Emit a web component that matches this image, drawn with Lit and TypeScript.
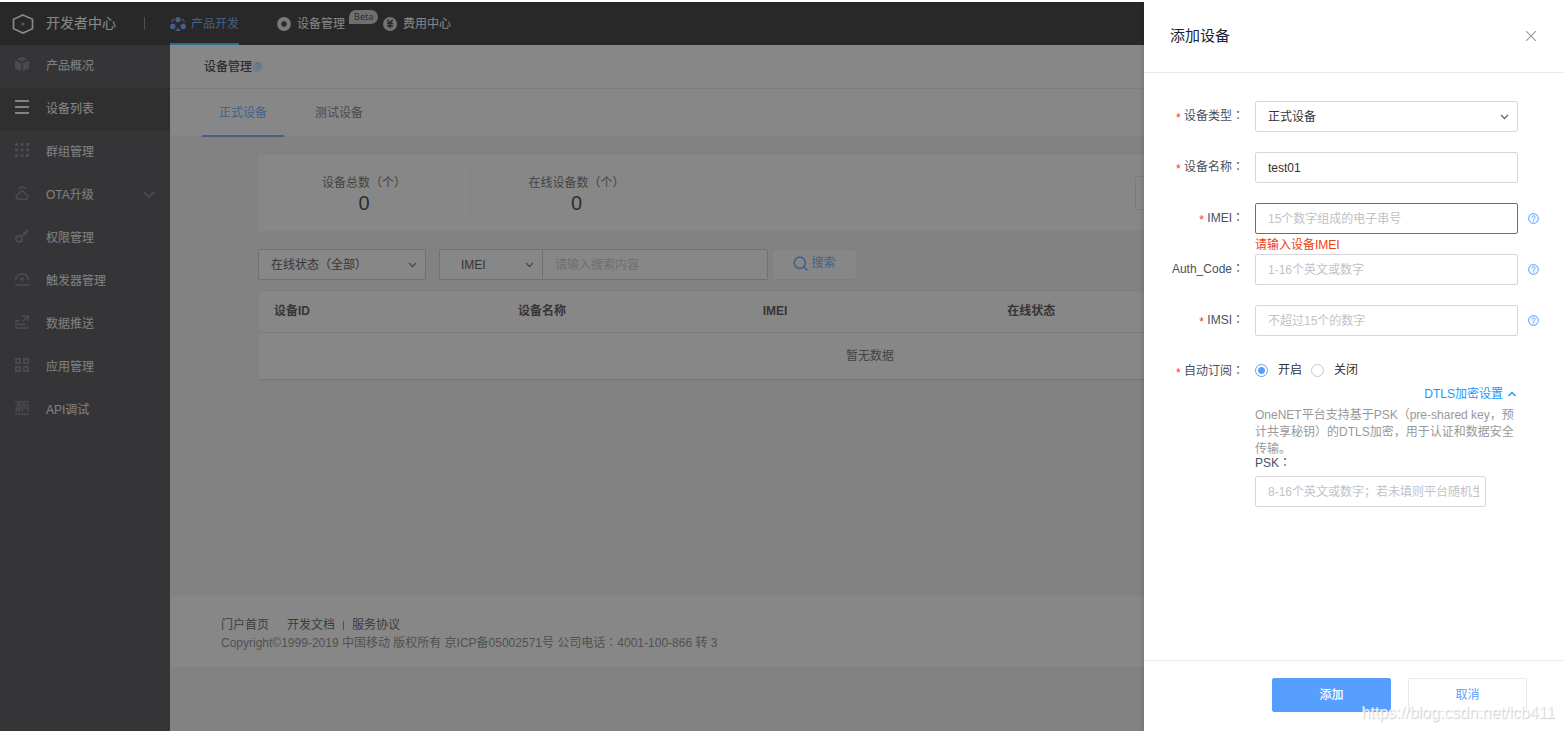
import { LitElement, html, css, svg, nothing } from "lit";
import { customElement, state } from "lit/decorators.js";
import { classMap } from "lit/directives/class-map.js";

const base = css`
  :host {
    display: block;
    box-sizing: border-box;
    font: 12px/18px "Liberation Sans", "Noto Sans CJK SC", sans-serif;
    text-spacing-trim: space-all;
  }
  *, *::before, *::after { box-sizing: border-box; }
  a { color: inherit; text-decoration: none; }
  button, input, select { font: inherit; margin: 0; }
  button { cursor: pointer; }
  svg { display: block; flex: none; }
  .mid { font-family: "Liberation Sans", "Noto Sans CJK TC", sans-serif; }
  .field {
    height: 31px;
    width: 100%;
    padding: 0 12px;
    border: 1px solid #d7d7db;
    border-radius: 2px;
    background: #fff;
    color: #333;
    outline: none;
    appearance: none;
  }
  .field::placeholder { color: #bfc2c9; opacity: 1; }
  .select { position: relative; }
  .select svg { position: absolute; right: 9px; top: 12px; pointer-events: none; }
`;

const chevron = html`<svg width="9" height="8" viewBox="0 0 9 8" fill="none" stroke="#666" stroke-width="1.3" aria-hidden="true"><path d="M1 2l3.5 3.5L8 2"/></svg>`;

const glyph = (body: unknown) =>
  html`<svg width="14" height="14" viewBox="0 0 14 14" aria-hidden="true">${body}</svg>`;

const glyphs: Record<string, unknown> = {
  box: svg`<path fill="currentColor" d="M7 0l5.6 2L7 4.4 1.4 2zM0 3.6l6.2 2.5V14L0 11.6zM14 3.6L7.8 6.1V14l6.2-2.4z"/>`,
  list: svg`<path fill="currentColor" d="M0 0h14v2H0zM0 6h14v2H0zM0 12h14v2H0z"/>`,
  dots: svg`<path fill="currentColor" d="M0 0h3v3H0zM5.5 0h3v3h-3zM11 0h3v3h-3zM0 5.5h3v3H0zM5.5 5.5h3v3h-3zM11 5.5h3v3h-3zM0 11h3v3H0zM5.5 11h3v3h-3zM11 11h3v3h-3z"/>`,
  ota: svg`<path fill="none" stroke="currentColor" stroke-width="1.6" d="M3.3 13.2a2.500 2.500 0 0 1-.6-4.800Q4.500 7.800 4.800 6.200a2.800 2.800 0 0 1 4.400 0Q9.500 7.800 11.300 8.400a2.500 2.500 0 0 1-.6 4.800zM3.300 2.800q3.700-3.600 7.400 0"/>`,
  key: svg`<g fill="none" stroke="currentColor" stroke-width="1.8"><circle cx="4" cy="10" r="3"/><path d="M6 7.800L13.300.8M8.500 3l2.800 2.800M11 1.500l1.800 1.800"/></g>`,
  trigger: svg`<path fill="none" stroke="currentColor" stroke-width="1.7" d="M.8 8A6.200 6.200 0 0 1 13.200 8M0 13h14"/><circle cx="7" cy="7" r="2" fill="currentColor"/>`,
  push: svg`<path fill="none" stroke="currentColor" stroke-width="1.7" d="M0 5.800h4M0 9.400h10M0 13h14M7 1h6v5M12.800 1.200L7.500 6.500"/>`,
  apps: svg`<path fill="none" stroke="currentColor" stroke-width="1.8" d="M.9.9h4.200v4.200H.9zM8.900.9h4.200v4.200H8.900zM.9 8.900h4.200v4.200H.9zM8.900 8.900h4.200v4.200H8.900z"/>`,
  api: svg`<path fill="none" stroke="currentColor" stroke-width="1.4" d="M0 .7h14M0 13.300h14M1 11L3 3h1.700v8M1.600 8.500h3M7.300 11V3.200h2.900v3.900H7.300M13 3v8"/>`,
};

const mark = (text: string) => html`<span class="mid">${text}</span>`;

@customElement("top-bar")
class TopBar extends LitElement {
  static styles = [base, css`
    .bar { display: flex; height: 43px; align-items: center; background: #121212; color: #fff; }
    .brand { display: flex; align-items: center; gap: 12px; width: 144px; padding-left: 12px; font-size: 14px; }
    .brand span { padding-bottom: 2px; }
    .rule { width: 1px; height: 13px; background: #70707c; }
    nav { display: flex; align-self: stretch; gap: 38px; margin-left: 25px; }
    .item { position: relative; display: flex; align-items: center; gap: 6px; border-bottom: 2px solid transparent; padding-top: 2px; }
    .item span { padding-top: 1px; }
    .item.on { color: #579fff; border-bottom-color: #22c0ff; gap: 5px; }
    .item .beta {
      position: absolute; left: 100%; top: 8px; margin-left: 4px; height: 14px; padding: 0 5px;
      border-radius: 7px 7px 7px 0; background: #c4c4c4; color: #222; font-size: 9px; line-height: 14px;
      font-family: "Noto Sans", sans-serif;
    }
  `];
  render() {
    return html`<header class="bar">
      <a class="brand" href="#">
        <svg width="22" height="20" viewBox="0 0 22 20"><path d="M11 1l9.500 4.200v9.600L11 19l-9.500-4.200V5.200z" fill="none" stroke="#fff" stroke-width="1.700"/><circle cx="11" cy="10" r="1.600" fill="#22b4ff"/></svg>
        <span>开发者中心</span>
      </a>
      <span class="rule"></span>
      <nav>
        <a class="item on" href="#"><svg width="16" height="14" viewBox="0 0 16 14"><g fill="currentColor"><circle cx="8" cy="2.700" r="2.600"/><circle cx="2.800" cy="9.500" r="2.700"/><circle cx="13.200" cy="9.500" r="2.700"/><circle cx="8" cy="12.500" r="1.300"/></g><path d="M4.200 1.800Q2 3 1.600 5.500M11.800 1.800Q14 3 14.400 5.500M5.500 13q2.500 1.200 5 0" fill="none" stroke="currentColor" stroke-width="1.200"/></svg><span>产品开发</span></a>
        <a class="item" href="#"><svg width="14" height="14" viewBox="0 0 14 14"><circle cx="7" cy="7" r="4.800" fill="none" stroke="#ddd" stroke-width="4.200"/></svg><span>设备管理</span><span class="beta">Beta</span></a>
        <a class="item" href="#"><svg width="14" height="14" viewBox="0 0 14 14"><circle cx="7" cy="7" r="7" fill="#ccc"/><path d="M4.200 2.800L7 6l2.800-3.200M7 6v5.500M4 6.500h6M4 9h6" fill="none" stroke="#121212" stroke-width="1.300"/></svg><span>费用中心</span></a>
      </nav>
    </header>`;
  }
}

interface Entry { icon: string; label: string; more?: boolean }

@customElement("side-menu")
class SideMenu extends LitElement {
  static styles = [base, css`
    :host { background: #343438; }
    .item { display: flex; align-items: center; gap: 17px; height: 43px; padding: 0 15px 2px; color: #eee; }
    .item svg { color: #666974; }
    .item svg:first-child { margin-bottom: 3px; }
    .item.on { background: #252527; color: #fff; }
    .item.on svg { color: #f4f4f4; }
    .label { flex: 1; }
  `];
  private entries: Entry[] = [
    { icon: "box", label: "产品概况" },
    { icon: "list", label: "设备列表" },
    { icon: "dots", label: "群组管理" },
    { icon: "ota", label: "OTA升级", more: true },
    { icon: "key", label: "权限管理" },
    { icon: "trigger", label: "触发器管理" },
    { icon: "push", label: "数据推送" },
    { icon: "apps", label: "应用管理" },
    { icon: "api", label: "API调试" },
  ];
  render() {
    return html`<nav>${this.entries.map((e, i) => html`
      <a class=${classMap({ item: true, on: i === 1 })} href="#">
        ${glyph(glyphs[e.icon])}
        <span class="label">${e.label}</span>
        ${e.more ? html`<svg width="12" height="8" viewBox="0 0 12 8"><path d="M1 1l5 5 5-5" fill="none" stroke="currentColor" stroke-width="2"/></svg>` : nothing}
      </a>`)}</nav>`;
  }
}

@customElement("device-page")
class DevicePage extends LitElement {
  static styles = [base, css`
    :host { display: flex; flex-direction: column; background: #f2f2f2; color: #555; }
    .title { display: flex; align-items: center; height: 44px; padding: 0 34px; background: #fff; border-bottom: 1px solid #eaeaea; }
    h1 { margin: 0; font-size: 12px; font-weight: 500; color: #222; }
    .tip { width: 11px; height: 11px; border-radius: 50%; background: #d3e6fb; color: #579fff; font-size: 9px; line-height: 11px; text-align: center; }
    .tabs { display: flex; gap: 14px; height: 48px; padding-left: 32px; background: #fff; border-bottom: 1px solid #eaeaea; }
    .tab { height: 48px; padding: 2px 17px 0; border: 0; border-bottom: 2px solid transparent; background: none; color: #666; }
    .tab.on { color: #579fff; border-color: #579fff; }
    .content { flex: 1; padding: 18px 81px 0 88px; }
    .stats { display: flex; align-items: center; height: 76px; background: #fff; }
    .stat { display: flex; flex-direction: column; justify-content: center; width: 212px; height: 54px; padding-top: 2px; text-align: center; }
    .stat + .stat { border-left: 1px solid #f2f2f2; }
    .num { font-size: 20px; line-height: 22px; color: #222; }
    .actions { display: flex; width: 347px; margin-left: auto; }
    .plain { height: 34px; width: 120px; background: #fff; border: 1px solid #e3e3e6; border-radius: 2px; }
    .filters { display: flex; margin: 18px 0 10px; }
    .field { border-color: #c8c8cc; }
    .status { width: 168px; margin-right: 13px; }
    .kind { width: 104px; }
    .kind .field { padding-left: 21px; border-radius: 2px 0 0 2px; }
    .query { width: 225px; }
    .query .field { border-left: 0; border-radius: 0 2px 2px 0; }
    .search { display: flex; align-items: center; justify-content: center; gap: 3px; width: 85px; height: 31px; margin-left: 4px; padding: 0 0 3px; border: 1px solid #eaeaea; border-radius: 2px; background: #fff; color: #579fff; }
    table { width: 100%; table-layout: fixed; border-collapse: collapse; background: #fff; border: 1px solid #eaeaea; }
    th { height: 42px; padding: 0 15px 2px; text-align: left; color: #333; border-bottom: 1px solid #e4e4e4; }
    td { height: 47px; padding: 0; text-align: center; border-bottom: 1px solid #d8d8d8; }
    footer { margin-bottom: 64px; padding: 20px 51px 15px; background: #fff; color: #777; }
    .links { display: flex; align-items: center; color: #444; }
    .gap { margin-left: 18px; }
    .bar { width: 1px; height: 9px; margin: 0 8px; background: #777; }
  `];
  render() {
    return html`
      <div class="title"><h1>设备管理</h1><span class="tip">?</span></div>
      <div class="tabs"><button class="tab on">正式设备</button><button class="tab">测试设备</button></div>
      <div class="content">
        <section class="stats">
          <div class="stat"><span>设备总数（个）</span><span class="num">0</span></div>
          <div class="stat"><span>在线设备数（个）</span><span class="num">0</span></div>
          <div class="actions"><button class="plain" aria-label="添加设备"></button></div>
        </section>
        <div class="filters">
          <div class="select status"><select class="field" aria-label="在线状态"><option>在线状态（全部）</option></select>${chevron}</div>
          <div class="select kind"><select class="field" aria-label="搜索类型"><option>IMEI</option></select>${chevron}</div>
          <div class="query"><input class="field" aria-label="搜索内容" placeholder="请输入搜索内容"></div>
          <button class="search"><svg width="15" height="15" viewBox="0 0 15 15" fill="none" stroke="currentColor" stroke-width="1.700"><circle cx="6.800" cy="6.800" r="5.600"/><path d="M11 11l3.300 3.300"/></svg>搜索</button>
        </div>
        <table>
          <thead><tr><th>设备ID</th><th>设备名称</th><th>IMEI</th><th>在线状态</th><th></th></tr></thead>
          <tbody><tr><td colspan="5">暂无数据</td></tr></tbody>
        </table>
      </div>
      <footer>
        <div class="links"><a href="#">门户首页</a><a class="gap" href="#">开发文档</a><span class="bar"></span><a href="#">服务协议</a></div>
        <div>Copyright©1999-2019 中国移动 版权所有 京ICP备05002571号 公司电话${mark("：")}4001-100-866 转 3</div>
      </footer>`;
  }
}

const help = html`<svg class="help" width="11" height="11" viewBox="0 0 11 11" aria-hidden="true"><circle cx="5.500" cy="5.500" r="4.900" fill="#eef6ff" stroke="#579fff"/><path d="M4 4.300a1.500 1.500 0 1 1 2.300 1.200q-.8.400-.8 1.200M5.500 7.500v1" fill="none" stroke="#579fff" stroke-width=".9"/></svg>`;

@customElement("add-device-drawer")
class AddDeviceDrawer extends LitElement {
  static styles = [base, css`
    :host { display: flex; flex-direction: column; background: #fff; color: #495060; }
    .head { display: flex; align-items: center; justify-content: space-between; height: 71px; padding: 0 27px 2px 26px; border-bottom: 1px solid #e8e8e8; }
    h2 { margin: 0; font-size: 15px; font-weight: 400; color: #1c2438; }
    .close { padding: 0; border: 0; background: none; color: #999; }
    form { flex: 1; padding-top: 28px; }
    .row { display: grid; grid-template-columns: 100px 263px 1fr; column-gap: 11px; min-height: 51px; }
    .label { height: 31px; line-height: 30px; text-align: right; white-space: nowrap; }
    .req { margin-right: 2px; color: #ed3f14; font-family: "Liberation Mono", monospace; vertical-align: -2px; line-height: 12px; }
    .error { height: 20px; line-height: 22px; color: #ed3f14; }
    .bad { border-color: #ed3f14; }
    .help { margin: 10px 0 0 -1px; }
    .radios { display: flex; align-items: center; height: 28px; color: #333; }
    .radios input { appearance: none; width: 13px; height: 13px; border: 1px solid #c5c8ce; border-radius: 50%; background: #fff; }
    .radios input:checked { border-color: #579fff; background: radial-gradient(#579fff 3px, #fff 4px); }
    .radios label { margin: 0 9px 0 10px; }
    .toggle { display: flex; align-items: center; gap: 5px; margin: 1px 2px 4px auto; padding: 0; border: 0; background: none; color: #0f9bff; }
    .note { margin: 0; line-height: 17px; color: #999; }
    .psk { display: block; margin-bottom: 8px; line-height: 10px; }
    .short { width: 231px; padding-right: 6px; }
    .foot { display: flex; justify-content: flex-end; gap: 17px; height: 71px; padding: 17px 36px; border-top: 1px solid #e8e8e8; }
    .foot button { width: 119px; height: 34px; border: 1px solid #e8e8e8; border-radius: 2px; background: #fff; color: #579fff; }
    .foot .primary { border-color: #579fff; background: #579fff; color: #fff; font-weight: 500; }
  `];
  @state() private auto = "on";

  private label(id: string, text: string, required = true) {
    return html`<label class="label" for=${id}>${required ? html`<span class="req">*</span>` : nothing}${text}${mark("：")}</label>`;
  }
  render() {
    return html`
      <div class="head"><h2>添加设备</h2>
        <button class="close" aria-label="关闭"><svg width="10" height="10" viewBox="0 0 10 10"><path d="M0 0l10 10M10 0L0 10" stroke="currentColor" stroke-width="1.100"/></svg></button>
      </div>
      <form>
        <div class="row">${this.label("type", "设备类型")}
          <div class="select"><select id="type" class="field"><option>正式设备</option></select>${chevron}</div></div>
        <div class="row">${this.label("name", "设备名称")}<div><input id="name" class="field" value="test01"></div></div>
        <div class="row">${this.label("imei", "IMEI")}
          <div><input id="imei" class="field bad" placeholder="15个数字组成的电子串号"><div class="error">请输入设备IMEI</div></div>${help}</div>
        <div class="row">${this.label("auth", "Auth_Code", false)}<div><input id="auth" class="field" placeholder="1-16个英文或数字"></div>${help}</div>
        <div class="row">${this.label("imsi", "IMSI")}<div><input id="imsi" class="field" placeholder="不超过15个的数字"></div>${help}</div>
        <div class="row">${this.label("on", "自动订阅")}
          <div>
            <div class="radios">
              <input type="radio" id="on" name="auto" .checked=${this.auto === "on"} @change=${() => (this.auto = "on")}><label for="on">开启</label>
              <input type="radio" id="off" name="auto" .checked=${this.auto === "off"} @change=${() => (this.auto = "off")}><label for="off">关闭</label>
            </div>
            <button type="button" class="toggle">DTLS加密设置<svg width="8" height="6" viewBox="0 0 8 6"><path d="M.5 5L4 1.500 7.500 5" fill="none" stroke="currentColor" stroke-width="1.400"/></svg></button>
            <p class="note">OneNET平台支持基于PSK（pre-shared key，预计共享秘钥）的DTLS加密，用于认证和数据安全传输。</p>
            <label class="psk" for="psk">PSK${mark("：")}</label>
            <input id="psk" class="field short" placeholder="8-16个英文或数字；若未填则平台随机生成">
          </div>
        </div>
      </form>
      <div class="foot"><button class="primary">添加</button><button>取消</button></div>`;
  }
}

@customElement("app-root")
class AppRoot extends LitElement {
  static styles = [base, css`
    :host { display: flex; padding-top: 2px; min-height: 100vh; background: #fff; }
    .shell { position: relative; display: flex; flex: 1; flex-direction: column; overflow: hidden; }
    .body { display: flex; flex: 1; }
    side-menu { width: 170px; flex: none; }
    device-page { flex: 1; min-width: 0; }
    .mask { position: absolute; inset: 0; background: rgba(55, 55, 55, 0.6); }
    add-device-drawer { position: absolute; top: 0; right: 0; bottom: 0; width: 419px; box-shadow: 0 0 6px rgba(0, 0, 0, 0.2); }
    .stamp { position: absolute; right: 8px; bottom: 8px; font-size: 16px; line-height: 20px; color: #fffc; text-shadow: 1px 1px 1px #ccc; pointer-events: none; }
  `];
  render() {
    return html`<div class="shell">
      <top-bar></top-bar>
      <div class="body"><side-menu></side-menu><device-page></device-page></div>
      <div class="mask"></div>
      <add-device-drawer></add-device-drawer>
      <span class="stamp">https://blog.csdn.net/lcb411</span>
    </div>`;
  }
}
